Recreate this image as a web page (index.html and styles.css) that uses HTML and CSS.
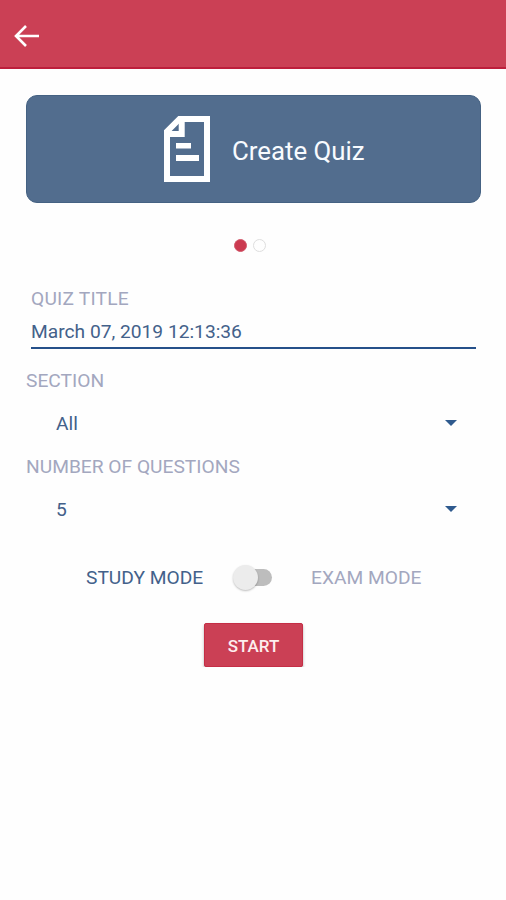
FILE: index.html
```html
<!DOCTYPE html>
<html>
	<head>
		<meta charset="utf-8">
		<title>Create Quiz</title>
		<link rel="stylesheet" href="styles.css">
	</head>
	<body>
		<header class="toolbar">
			<svg class="back" width="26" height="24" viewBox="0 0 26 24">
				<path d="M25 12H2M12 2L2 12l10 10"/>
			</svg>
		</header>
		<main>
			<div class="banner">
				<svg width="46" height="66" viewBox="0 0 46 66">
					<path class="outline" d="M15.500 3H43v60H3V15.500z"/>
					<path class="outline" d="M17.700 3v15H3"/>
					<path class="lines" d="M12 27h15v5.500H12zM12 39h23v6H12z"/>
				</svg>
				<span class="banner-title">Create Quiz</span>
			</div>
			<div class="dots">
				<span class="dot active"></span>
				<span class="dot"></span>
			</div>
			<div class="title-field">
				<div class="label quiz-label">QUIZ TITLE</div>
				<div class="title-value">March 07, 2019 12:13:36</div>
			</div>
			<div class="label">SECTION</div>
			<div class="select">
				<span>All</span>
				<span class="arrow"></span>
			</div>
			<div class="label number-label">NUMBER OF QUESTIONS</div>
			<div class="select">
				<span>5</span>
				<span class="arrow"></span>
			</div>
			<div class="modes">
				<span class="study">STUDY MODE</span>
				<span class="switch"><span class="thumb"></span></span>
				<span class="exam">EXAM MODE</span>
			</div>
			<button class="start">START</button>
		</main>
	</body>
</html>
```

FILE: styles.css
```css
* {
	box-sizing: border-box;
}
body {
	margin: 0;
	background: #fefefe;
	font-family: Roboto, sans-serif;
	font-size: 19.2px;
	color: #43618a;
}
.toolbar {
	display: flex;
	align-items: center;
	height: 69px;
	padding: 4px 14px 0;
	background: #cb4055;
	border-bottom: 2px solid #bd1e3b;
}
.back {
	fill: none;
	stroke: #fff;
	stroke-width: 2.6;
}
main {
	padding: 26px 26px 0;
}
.banner {
	display: flex;
	align-items: center;
	width: 455px;
	height: 108px;
	padding-left: 137px;
	background: #526d8e;
	border: 1px solid #456283;
	border-radius: 11px;
}
.outline {
	fill: none;
	stroke: #fff;
	stroke-width: 6;
}
.lines {
	fill: #fff;
}
.banner-title {
	margin: 3px 0 0 22px;
	font-size: 25.8px;
	color: #f8fbff;
}
.dots {
	display: flex;
	gap: 6px;
	margin: 36px 0 0 208px;
}
.dot {
	width: 13px;
	height: 13px;
	border: 1px solid #dedede;
	border-radius: 50%;
}
.active {
	background: #cb3a50;
	border-color: #d25a6c;
}
.label {
	height: 24px;
	line-height: 24px;
	color: #a3a7bf;
}
.quiz-label {
	letter-spacing: 0.2px;
}
.title-field {
	width: 445px;
	height: 62px;
	margin: 35px 0 20px 5px;
	border-bottom: 2px solid #25508a;
}
.title-value {
	margin-top: 9px;
	line-height: 24px;
}
.select {
	display: flex;
	align-items: center;
	justify-content: space-between;
	height: 24px;
	margin-top: 18px;
	padding: 0 23px 0 30px;
}
.arrow {
	border: 6px solid transparent;
	border-top-color: #2f5a8e;
	border-bottom: 0;
}
.number-label {
	margin-top: 20px;
}
.modes {
	display: flex;
	align-items: center;
	height: 28px;
	margin-top: 42px;
	padding-left: 60px;
}
.study {
	width: 148px;
}
.switch {
	display: flex;
	align-items: center;
	width: 38px;
	height: 17px;
	border-radius: 9px;
	background: #bdbdbd;
}
.thumb {
	flex: none;
	width: 25px;
	height: 25px;
	margin-left: -1px;
	border-radius: 50%;
	background: #ececec;
	box-shadow: 0 1px 2px rgba(0, 0, 0, 0.25);
}
.exam {
	margin-left: 39px;
	color: #a3a7bf;
}
.start {
	display: block;
	width: 99px;
	height: 44px;
	margin: 32px 0 0 178px;
	padding: 1px 0 0;
	border: 1px solid #c52e46;
	border-radius: 2px;
	background: #cb4055;
	box-shadow: 0 2px 3px rgba(0, 0, 0, 0.3);
	font-family: Roboto, sans-serif;
	font-size: 17px;
	font-weight: 500;
	color: #fdeeee;
}
```
